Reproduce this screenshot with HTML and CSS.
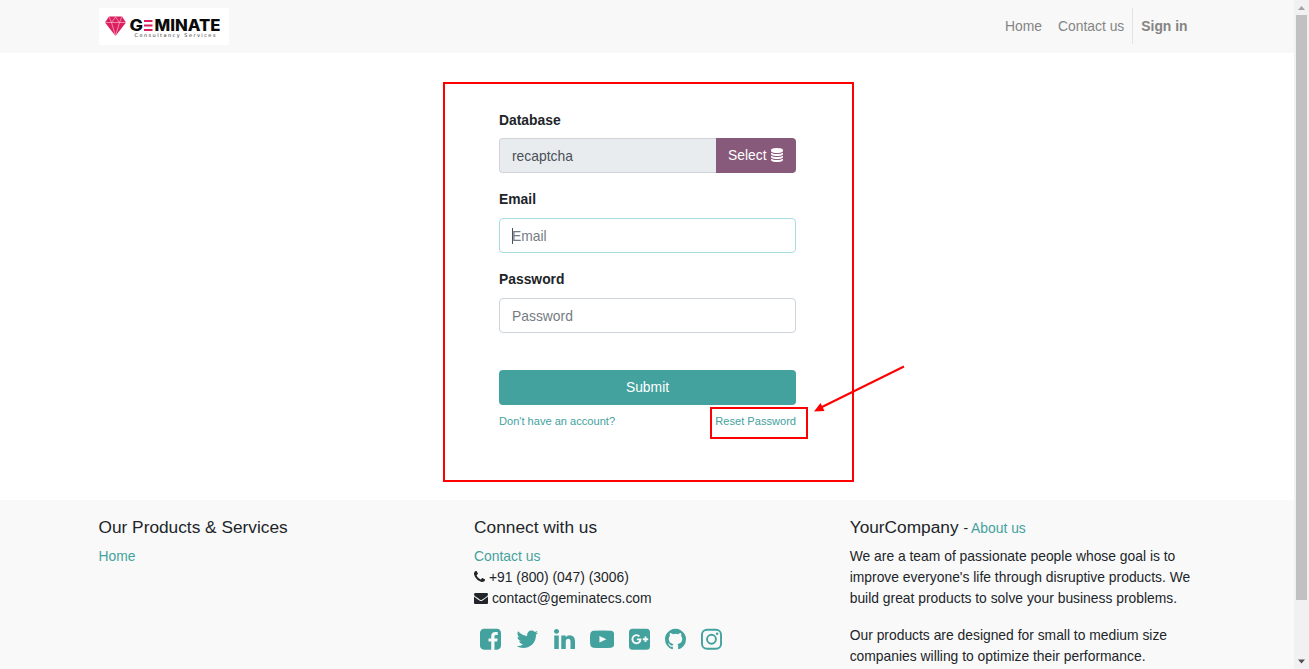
FILE: index.html
```html
<!DOCTYPE html>
<html lang="en">
<head>
<meta charset="utf-8">
<title>Login</title>
<link rel="stylesheet" href="styles.css">
</head>
<body>
<div class="page">
  <header class="header">
    <div class="container header-row">
      <a class="logo">
        <svg width="130" height="37" viewBox="0 0 130 37">
          <rect width="130" height="37" fill="#fff"/>
          <path d="M10 8.500h13l4 6L16.500 28 6 14.500z" fill="#dc1f60"/>
          <path d="M6 14.500h21M10 8.500l2.500 6L16.500 9l4 5.500 2.500-6M12.500 14.500l4 13.500 4-13.500" fill="none" stroke="#f9b6cb" stroke-width=".7"/>
          <g class="brand"><text x="30.500" y="23" textLength="13.500" lengthAdjust="spacingAndGlyphs">G</text><text x="55.500" y="23" textLength="66" lengthAdjust="spacingAndGlyphs">MINATE</text></g>
          <path d="M45 13h8.500M45 17.500h8.500M45 22h8.500" stroke="#dc1f60" stroke-width="2"/>
          <text class="tagline" x="35.500" y="29.300" textLength="81">Consultancy Services</text>
        </svg>
      </a>
      <nav class="nav">
        <a>Home</a><a>Contact us</a><a class="signin">Sign in</a>
      </nav>
    </div>
  </header>

  <main class="main">
    <section class="login">
      <label class="first">Database</label>
      <div class="input-group">
        <div class="field readonly">recaptcha</div>
        <div class="select">Select <svg width="14" height="14" viewBox="0 0 1792 1792" fill="currentColor"><path d="M896 768q237 0 443-43t325-127v170q0 69-103 128t-280 93.500-385 34.500-385-34.500-280-93.500-103-128v-170q119 84 325 127t443 43zm0 768q237 0 443-43t325-127v170q0 69-103 128t-280 93.500-385 34.500-385-34.500-280-93.500-103-128v-170q119 84 325 127t443 43zm0-384q237 0 443-43t325-127v170q0 69-103 128t-280 93.500-385 34.500-385-34.500-280-93.500-103-128v-170q119 84 325 127t443 43zm0-1152q208 0 385 34.500t280 93.500 103 128v128q0 69-103 128t-280 93.500-385 34.500-385-34.500-280-93.500-103-128v-128q0-69 103-128t280-93.500 385-34.500z"/></svg></div>
      </div>
      <label>Email</label>
      <div class="field focused"><span class="caret"></span>Email</div>
      <label>Password</label>
      <div class="field">Password</div>
      <div class="submit">Submit</div>
      <div class="links"><a>Don't have an account?</a><a class="reset">Reset Password</a></div>
    </section>
  </main>

  <footer class="footer">
    <div class="container footer-row">
      <section>
        <h4>Our Products &amp; Services</h4>
        <a>Home</a>
      </section>
      <section>
        <h4>Connect with us</h4>
        <div><a>Contact us</a></div>
        <div><svg class="glyph" width="11" height="14" viewBox="192 0 1408 1792"><path d="M1600 1240q0 27-10 70.500t-21 68.500q-21 50-122 106-94 51-186 51-27 0-53-3.500t-57.500-12.500-47-14.500-55.500-20.500-49-18q-98-35-175-83-127-79-264-216t-216-264q-48-77-83-175-3-9-18-49t-20.500-55.500-14.500-47-12.500-57.500-3.500-53q0-92 51-186 56-101 106-122 25-11 68.500-21t70.500-10q14 0 21 3 18 6 53 76 11 19 30 54t35 63.500 31 53.500q3 4 17.500 25t21.500 35.500 7 28.500q0 20-28.500 50t-62 55-62 53-28.500 46q0 9 5 22.500t8.500 20.500 14 24 11.500 19q76 137 174 235t235 174q2 1 19 11.500t24 14 20.500 8.500 22.500 5q18 0 46-28.500t53-62 55-62 50-28.500q14 0 28.500 7t35.500 21.500 25 17.500q25 15 53.500 31t63.500 35 54 30q70 35 76 53 3 7 3 21z"/></svg> +91 (800) (047) (3006)</div>
        <div><svg class="glyph" width="14" height="14" viewBox="0 0 1792 1792"><path d="M1792 710v794q0 66-47 113t-113 47h-1472q-66 0-113-47t-47-113v-794q44 49 101 87 362 246 497 345 57 42 92.500 65.500t94.500 48 110 24.500h2q51 0 110-24.500t94.500-48 92.500-65.500q170-123 498-345 57-39 100-87zm0-294q0 79-49 151t-122 123q-376 261-468 325-10 7-42.500 31t-54 38.500-52 32.500-57.500 27-50 9h-2q-23 0-50-9t-57.500-27-52-32.500-54-38.500-42.500-31q-91-64-262-182.500t-205-142.500q-62-42-117-115.500t-55-136.500q0-78 41.500-130t118.500-52h1472q65 0 112.500 47t47.500 113z"/></svg> contact@geminatecs.com</div>
        <div class="social">
          <svg width="21" height="24.500" viewBox="128 0 1536 1792"><path d="M1376 128q119 0 203.500 84.500t84.500 203.500v960q0 119-84.500 203.500t-203.500 84.500h-188v-595h199l30-232h-229v-148q0-56 23.500-84t91.500-28l122-1v-207q-63-9-178-9-136 0-217.500 80t-81.500 226v171h-200v232h200v595h-532q-119 0-203.500-84.500t-84.500-203.500v-960q0-119 84.500-203.500t203.500-84.500h960z"/></svg>
          <svg width="22.750" height="24.500" viewBox="64 0 1664 1792"><path d="M1684 408q-67 98-162 167 1 14 1 42 0 130-38 259.500t-115.500 248.500-184.500 210.500-258 146-323 54.500q-271 0-496-145 35 4 78 4 225 0 401-138-105-2-188-64.500t-114-159.500q33 5 61 5 43 0 85-11-112-23-185.500-111.500t-73.500-205.500v-4q68 38 146 41-66-44-105-115t-39-154q0-88 44-163 121 149 294.500 238.500t371.500 99.500q-8-38-8-74 0-134 94.500-228.500t228.500-94.500q140 0 236 102 109-21 205-78-37 115-142 178 93-10 186-50z"/></svg>
          <svg width="21" height="24.500" viewBox="128 0 1536 1792"><path d="M477 625v991h-330v-991h330zm21-306q1 73-50.500 122t-135.500 49h-2q-82 0-132-49t-50-122q0-74 51.500-122.500t134.500-48.500 133 48.500 51 122.500zm1166 729v568h-329v-530q0-105-40.500-164.500t-126.500-59.500q-63 0-105.500 34.500t-63.500 85.500q-11 30-11 81v553h-329q2-399 2-647t-1-296l-1-48h329v144h-2q20-32 41-56t56.500-52 87-43.500 114.500-15.500q171 0 275 113.500t104 332.500z"/></svg>
          <svg width="24.500" height="24.500" viewBox="0 0 1792 1792"><path d="M1792 896q0 96-1 150t-8.500 136.500-22.500 147.500q-16 73-69 123t-124 58q-222 25-671 25t-671-25q-71-8-124.500-58t-69.500-123q-14-65-21.500-147.500t-8.500-136.500-1-150 1-150 8.500-136.500 22.500-147.500q16-73 69-123t124-58q222-25 671-25t671 25q71 8 124.500 58t69.500 123q14 65 21.500 147.500t8.500 136.500 1 150z"/><path d="M690 650l510 246-510 246z" fill="#f9f9f9"/></svg>
          <svg width="21" height="24.500" viewBox="128 0 1536 1792"><rect x="128" y="128" width="1536" height="1536" rx="260"/><path d="M890 690A295 295 0 1 0 970 905H705M1135 896h400M1335 696v400" fill="none" stroke="#f9f9f9" stroke-width="135"/></svg>
          <svg width="21" height="24.500" viewBox="128 0 1536 1792"><path d="M896 128q209 0 385.500 103t279.500 279.500 103 385.500q0 251-146.500 451.500t-378.500 277.500q-27 5-40-7t-13-30q0-3 .5-76.500t.5-134.500q0-97-52-142 57-6 102.500-18t94-39 81-66.500 53-105 20.500-150.500q0-119-79-206 37-91-8-204-28-9-81 11t-92 44l-38 24q-93-26-192-26t-192 26q-16-11-42.500-27t-83.500-38.500-85-13.500q-45 113-8 204-79 87-79 206 0 85 20.500 150t52.500 105 80.500 67 94 39 102.500 18q-39 36-49 103-21 10-45 15t-57 5-65.500-21.500-55.500-62.500q-19-32-48.500-52t-49.500-24l-20-3q-21 0-29 4.500t-5 11.500 9 14 13 12l7 5q22 10 43.500 38t31.500 51l10 23q13 38 44 61.500t67 30 69.500 7 55.500-3.500l23-4q0 38 .5 88.500t.5 54.500q0 18-13 30t-40 7q-232-77-378.500-277.500t-146.500-451.500q0-209 103-385.500t279.500-279.500 385.500-103z"/></svg>
          <svg width="21" height="24.500" viewBox="128 0 1536 1792"><g fill="none" stroke="#43a29d"><rect x="198" y="198" width="1396" height="1396" rx="370" stroke-width="140"/><circle cx="896" cy="896" r="325" stroke-width="140"/></g><circle cx="1306" cy="486" r="92"/></svg>
        </div>
      </section>
      <section>
        <h4 class="company">YourCompany <small>- <a>About us</a></small></h4>
        <p>We are a team of passionate people whose goal is to improve everyone's life through disruptive products. We build great products to solve your business problems.</p>
        <p>Our products are designed for small to medium size companies willing to optimize their performance.</p>
      </section>
    </div>
  </footer>
</div>
<aside class="scrollbar">
  <svg width="15" height="15"><path d="M4 10l3.500-4 3.500 4z" fill="#a3a3a3"/></svg>
  <div class="thumb"></div>
  <svg class="down" width="15" height="15"><path d="M4 5.500l3.500 4 3.500-4z" fill="#505050"/></svg>
</aside>

<div class="mark mark-form"></div>
<div class="mark mark-reset"></div>
<svg class="arrow" width="96" height="52" viewBox="812 362 96 52"><path d="M904 366.500L822 407" stroke="#f00" stroke-width="2"/><path d="M814 411.500L820.500 403l4 8z" fill="#f00"/></svg>
</body>
</html>
```
FILE: styles.css
```css
* { box-sizing: border-box; }
body {
  margin: 0;
  height: 669px;
  display: flex;
  overflow: hidden;
  background: #fff;
  color: #212529;
  font: 13.86px/21px "Liberation Sans", Arial, sans-serif;
}
a { color: #43a29d; }
svg { display: block; }
.page {
  width: 1294px;
  height: 669px;
  display: flex;
  flex-direction: column;
  overflow: hidden;
}
.container { width: 1097px; margin-left: 98.5px; }

.header { height: 53px; background: #f8f8f8; flex: none; }
.header-row { display: flex; justify-content: space-between; padding-top: 8px; }
.brand { font: 800 15.5px Inter, sans-serif; fill: #0a0a0a; }
.tagline { font: 5px "DejaVu Sans", sans-serif; fill: #333; }
.nav { display: flex; height: 36px; }
.nav a { color: #848484; padding: 8px; }
.nav .signin { font-weight: bold; border-left: 1px solid #e4e4e4; }

.main { height: 447px; flex: none; padding-top: 57px; }
.login { width: 297px; margin-left: 499px; }
.login label { display: block; font-weight: bold; margin-bottom: 8px; }
.login .first { margin-bottom: 7px; }
.field {
  height: 35px;
  margin-bottom: 16px;
  padding: 7px 12px;
  border: 1px solid #ced4da;
  border-radius: 4px;
  color: #757c83;
}
.input-group { display: flex; }
.readonly {
  flex: 1;
  background: #e9ecef;
  color: #495057;
  border-right: 0;
  border-radius: 4px 0 0 4px;
}
.select {
  width: 80px;
  height: 35px;
  padding: 7px 0 0 12px;
  display: flex;
  gap: 3px;
  background: #875a7b;
  color: #fff;
  border-radius: 0 4px 4px 0;
}
.select svg { margin-top: 3px; }
.focused { border-color: #a5dde0; display: flex; }
.caret { width: 1px; height: 16px; margin: 2px -1px 0 0; background: #495057; }
.submit {
  height: 35px;
  margin-top: 37px;
  padding-top: 7px;
  text-align: center;
  color: #fff;
  background: #43a29d;
  border-radius: 4px;
}
.links {
  display: flex;
  justify-content: space-between;
  padding-top: 6px;
  font-size: 11.08px;
}

.footer { flex: 1; background: #f9f9f9; padding-top: 17px; }
.footer-row { display: grid; grid-template-columns: 345.6px 345.6px 345.6px; column-gap: 30px; }
h4 { margin: 0 0 8px; font-size: 17.3px; line-height: 21px; font-weight: normal; }
h4 small { font-size: 13.86px; }
.company { margin-bottom: 7px; line-height: 21px; height: 21px; }
.company + p { padding-top: 1px; }
p { margin: 0 0 16px; }
.glyph { display: inline-block; vertical-align: -2px; fill: #212529; }
.social { display: flex; gap: 15px; padding: 18px 0 0 6px; fill: #43a29d; }

.scrollbar {
  width: 15px;
  height: 669px;
  display: flex;
  flex-direction: column;
  background: #f1f1f1;
}
.thumb { width: 11px; height: 585px; margin-left: 2px; background: #c1c1c1; }
.down { margin-top: auto; }

.mark { position: absolute; border: 2px solid #f00; }
.mark-form { left: 443px; top: 82px; width: 411px; height: 400px; }
.mark-reset { left: 710px; top: 407px; width: 98px; height: 32px; }
.arrow { position: absolute; left: 812px; top: 362px; }
```
